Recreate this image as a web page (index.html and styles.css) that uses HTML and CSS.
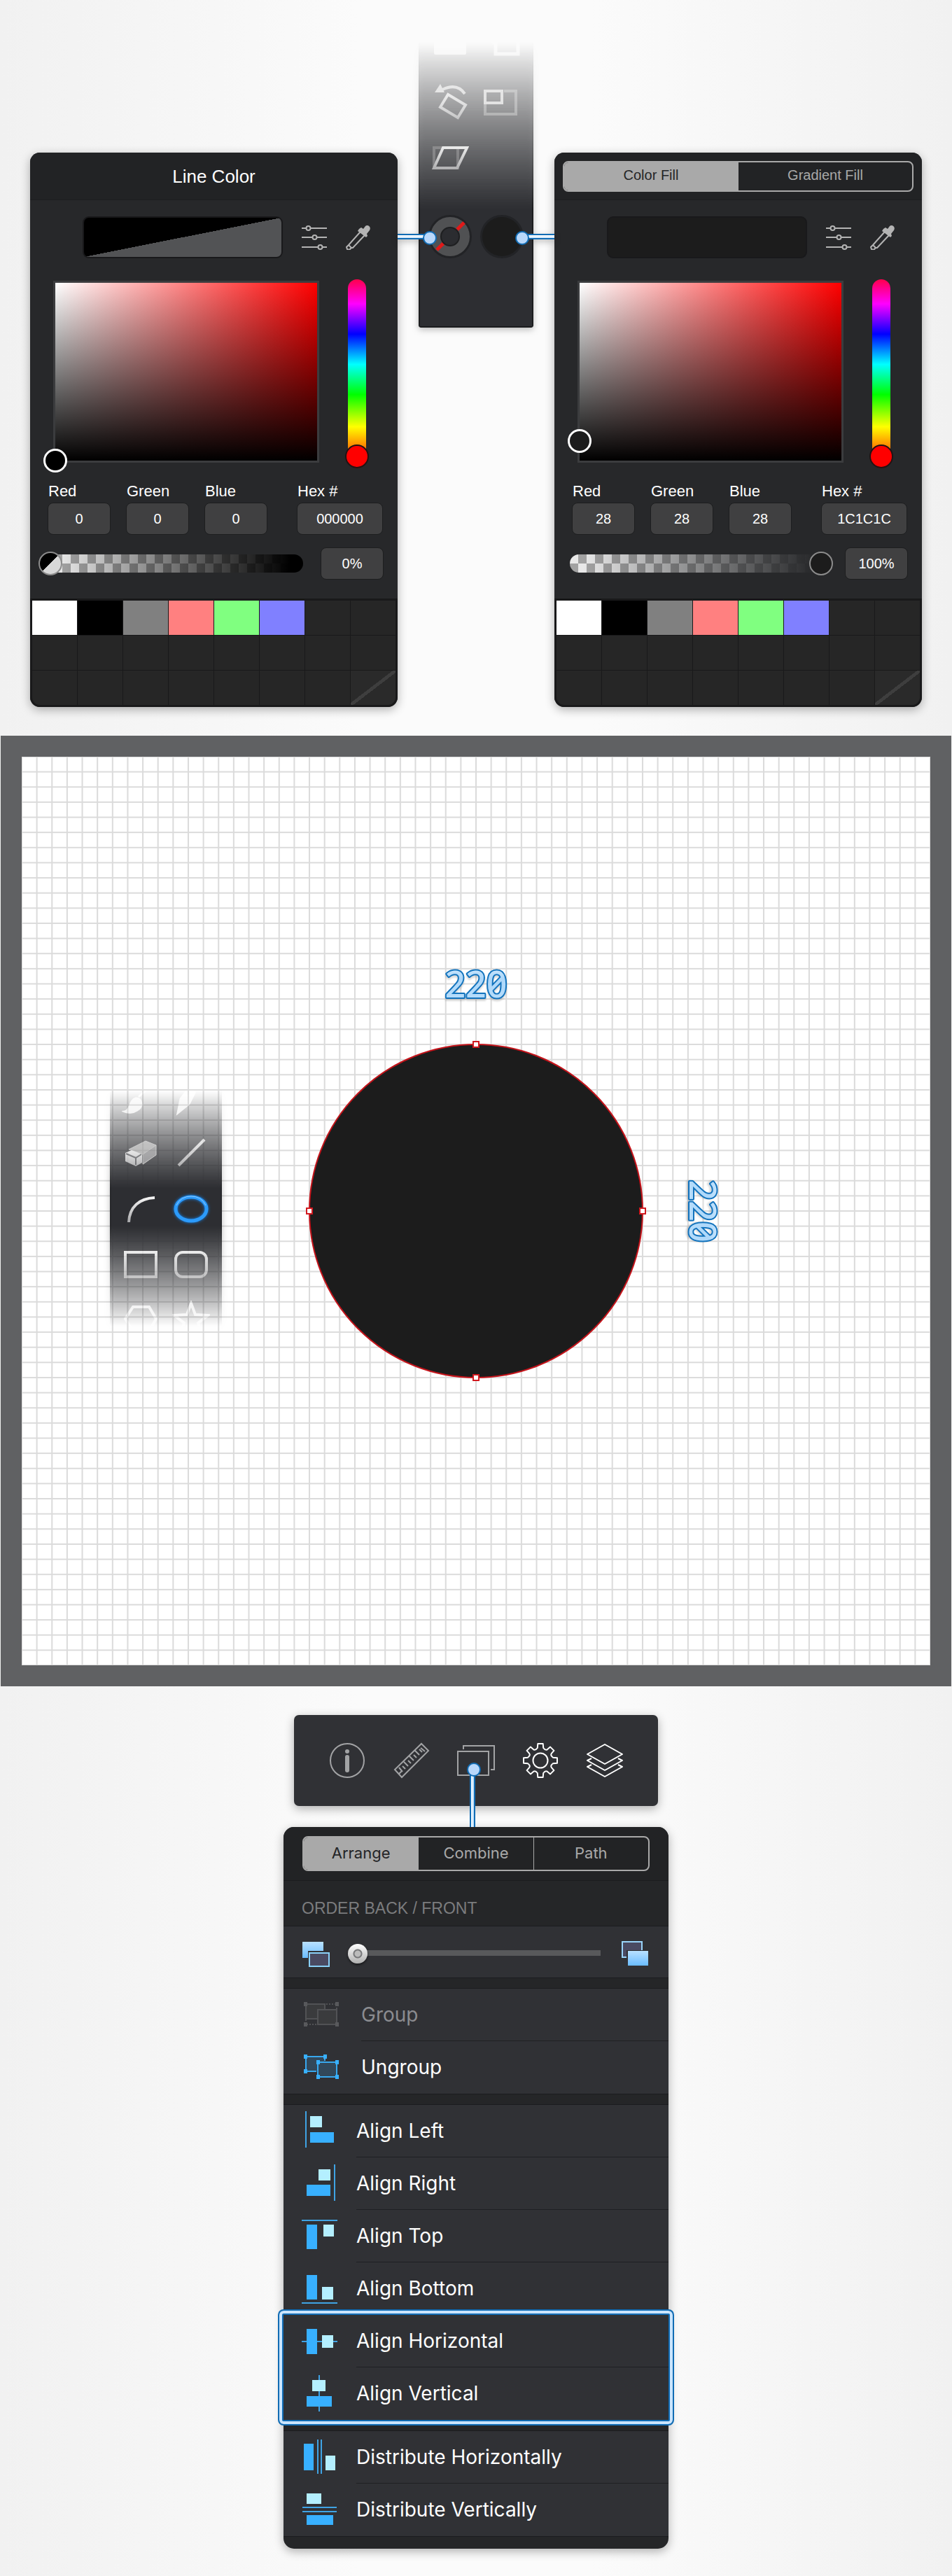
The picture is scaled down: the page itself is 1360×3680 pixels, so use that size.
FILE: index.html
```html
<!DOCTYPE html>
<html lang="en">
<head>
<meta charset="utf-8">
<meta name="viewport" content="width=device-width, initial-scale=1">
<title>Draw a circle and align it</title>
<link rel="stylesheet" href="styles.css">
</head>
<body>
<svg class="defs" aria-hidden="true">
  <defs>
    <linearGradient id="steel" x1="0" y1="0" x2="0" y2="1"><stop offset="0" stop-color="#f4f4f4"/><stop offset="1" stop-color="#a9a9ab"/></linearGradient>
    <linearGradient id="sky" x1="0" y1="0" x2="0" y2="1"><stop offset="0" stop-color="#b9e1ff"/><stop offset="1" stop-color="#6abcff"/></linearGradient>
    <symbol id="sliders" viewBox="0 0 36 36">
      <g fill="none" stroke="#b4b4b4" stroke-width="2"><path d="M0 5h6M13 5h23M0 18h15M22 18h14M0 32h23M30 32h6"/><circle cx="9.500" cy="5" r="3"/><circle cx="18.500" cy="18" r="3"/><circle cx="26.500" cy="32" r="3"/></g>
    </symbol>
    <symbol id="dropper" viewBox="0 0 36 36">
      <path d="M19 6l3-2 3 2 3-4c3-3 9 1 6 6l-4 5 1 3-2 2-12-9z" fill="#b4b4b4"/>
      <path d="M21 10L4 29l-3 3 1 3 3 1 3-3h2L27 15" fill="none" stroke="#b4b4b4" stroke-width="2" stroke-linejoin="round"/><path d="M4 29l4 4" stroke="#b4b4b4" stroke-width="2"/>
    </symbol>
  </defs>
</svg>

<main>
<section class="colors">
  <form class="panel">
    <header class="panel-head"><h2>Line Color</h2></header>
    <div class="preview-row">
      <div class="preview preview-split"></div>
      <button type="button" class="icon-btn" aria-label="Sliders"><svg><use href="#sliders"/></svg></button>
      <button type="button" class="icon-btn" aria-label="Pick color"><svg><use href="#dropper"/></svg></button>
    </div>
    <div class="picker-row">
      <div class="field"><span class="field-thumb thumb-black"></span></div>
      <div class="hue"><input type="range" min="0" max="360" value="0" aria-label="Hue"></div>
    </div>
    <div class="values">
      <label>Red<input type="text" value="0"></label>
      <label>Green<input type="text" value="0"></label>
      <label>Blue<input type="text" value="0"></label>
      <label class="hex">Hex #<input type="text" value="000000"></label>
    </div>
    <div class="alpha-row">
      <div class="alpha alpha-empty"><input type="range" min="0" max="100" value="0" aria-label="Opacity"></div>
      <input class="percent" type="text" value="0%" aria-label="Opacity percent">
    </div>
    <div class="swatches">
      <button type="button" class="white" aria-label="White"></button><button type="button" class="black" aria-label="Black"></button><button type="button" class="gray" aria-label="Gray"></button><button type="button" class="red" aria-label="Red"></button><button type="button" class="green" aria-label="Green"></button><button type="button" class="blue" aria-label="Blue"></button><i></i><i></i>
      <i></i><i></i><i></i><i></i><i></i><i></i><i></i><i></i>
      <i></i><i></i><i></i><i></i><i></i><i></i><i></i><button type="button" class="none" aria-label="No color"></button>
    </div>
  </form>

  <div class="toolbox">
    <div class="strip strip-down">
      <button type="button" aria-label="Blend"><svg width="54" height="54" viewBox="0 0 54 54"><path d="M6 5h42v32H6z" fill="#fff" stroke="#fff" stroke-width="4" stroke-linejoin="round"/><path d="M12 28l7-12 8 12zM32 28l7-12 8 12z" fill="#eee"/></svg></button>
      <button type="button" aria-label="Duplicate"><svg width="54" height="54" viewBox="0 0 54 54"><path d="M8 0l8 24M18 4h32v34H18z" fill="none" stroke="#fff" stroke-width="5"/></svg></button>
      <button type="button" aria-label="Rotate"><svg width="54" height="54" viewBox="0 0 54 54"><path d="M24 17l25 15-11 18-25-15z" fill="none" stroke="url(#steel)" stroke-width="4"/><path d="M16 10q21-10 32 6" fill="none" stroke="#ddd" stroke-width="4"/><path d="M5 14l8-12 6 12z" fill="#ddd"/></svg></button>
      <button type="button" aria-label="Scale"><svg width="54" height="54" viewBox="0 0 54 54"><path d="M30 12h17v33H3V30" fill="none" stroke="#c8c8c8" stroke-opacity=".5" stroke-width="4"/><path d="M3 12h24v17H3z" fill="none" stroke="#ddd" stroke-width="4"/></svg></button>
      <button type="button" aria-label="Shear"><svg width="54" height="54" viewBox="0 0 54 54"><path d="M4 14h34v29H4z" fill="none" stroke="#aaa" stroke-opacity=".4" stroke-width="4"/><path d="M17 14h34L37 43H4z" fill="none" stroke="url(#steel)" stroke-width="4"/></svg></button>
      <span></span>
      <button type="button" class="ink" aria-label="Line color"><svg width="64" height="64" viewBox="0 0 64 64"><circle cx="32" cy="32" r="31" fill="#222326"/><circle cx="32" cy="32" r="20.500" fill="none" stroke="#505153" stroke-width="15"/><path d="M13 51l10-10M42 22l10-10" stroke="#e11919" stroke-width="5"/><circle cx="32" cy="32" r="13" fill="#2b2c30" stroke="#1e1f21" stroke-width="2"/></svg></button>
      <button type="button" class="ink" aria-label="Fill color"><svg width="64" height="64" viewBox="0 0 64 64"><circle cx="32" cy="32" r="31" fill="#222326"/><circle cx="32" cy="32" r="28" fill="#1c1c1c"/></svg></button>
    </div>
    <span class="wire wire-left"></span>
    <span class="wire wire-right"></span>
  </div>

  <form class="panel">
    <header class="panel-head head-tabs">
      <div class="tabs tabs-small"><button type="button" class="on">Color Fill</button><button type="button">Gradient Fill</button></div>
    </header>
    <div class="preview-row">
      <div class="preview"></div>
      <button type="button" class="icon-btn" aria-label="Sliders"><svg><use href="#sliders"/></svg></button>
      <button type="button" class="icon-btn" aria-label="Pick color"><svg><use href="#dropper"/></svg></button>
    </div>
    <div class="picker-row">
      <div class="field"><span class="field-thumb thumb-ink"></span></div>
      <div class="hue"><input type="range" min="0" max="360" value="0" aria-label="Hue"></div>
    </div>
    <div class="values">
      <label>Red<input type="text" value="28"></label>
      <label>Green<input type="text" value="28"></label>
      <label>Blue<input type="text" value="28"></label>
      <label class="hex">Hex #<input type="text" value="1C1C1C"></label>
    </div>
    <div class="alpha-row">
      <div class="alpha alpha-full"><input type="range" min="0" max="100" value="100" aria-label="Opacity"></div>
      <input class="percent" type="text" value="100%" aria-label="Opacity percent">
    </div>
    <div class="swatches">
      <button type="button" class="white" aria-label="White"></button><button type="button" class="black" aria-label="Black"></button><button type="button" class="gray" aria-label="Gray"></button><button type="button" class="red" aria-label="Red"></button><button type="button" class="green" aria-label="Green"></button><button type="button" class="blue" aria-label="Blue"></button><i></i><i></i>
      <i></i><i></i><i></i><i></i><i></i><i></i><i></i><i></i>
      <i></i><i></i><i></i><i></i><i></i><i></i><i></i><button type="button" class="none" aria-label="No color"></button>
    </div>
  </form>
</section>

<section class="canvas">
  <svg class="art" viewBox="0 0 1298 1298">
    <defs>
      <pattern id="grid" width="21.6333" height="21.6333" patternUnits="userSpaceOnUse"><path d="M0 0H21.6333M0 0V21.6333M0 21.6333H21.6333M21.6333 0V21.6333" stroke="#000" stroke-opacity=".14" stroke-width="2" fill="none"/></pattern>
      <linearGradient id="ice" x1="0" y1="0" x2="0" y2="1"><stop offset="0" stop-color="#e6f4ff"/><stop offset=".4" stop-color="#aed8fa"/><stop offset="1" stop-color="#b8defb"/></linearGradient>
    </defs>
    <rect width="1298" height="1298" fill="#fff"/>
    <rect width="1298" height="1298" fill="url(#grid)"/>
    <circle cx="649" cy="649" r="238" fill="#1c1c1c" stroke="#c4141b" stroke-width="2"/>
    <g fill="#fff" stroke="#d11a20" stroke-width="2"><path d="M645 407h8v8h-8zM645 883h8v8h-8zM407 645h8v8h-8zM883 645h8v8h-8z"/></g>
    <text class="dim" x="649" y="344" text-anchor="middle">220</text>
    <text class="dim" transform="translate(954 649) rotate(90)" text-anchor="middle">220</text>
  </svg>
  <div class="toolbox shape-tools">
    <div class="strip strip-both">
      <button type="button" aria-label="Brush"><svg width="54" height="54" viewBox="0 0 54 54"><path d="M4 46c9-1 6-16 16-19 9-1 11 12 2 17-6 4-14 4-18 2zM24 25L42 8" fill="#fff" stroke="#fff" stroke-width="3"/></svg></button>
      <button type="button" aria-label="Pen"><svg width="54" height="54" viewBox="0 0 54 54"><path d="M8 48l4-20L24 12l8 7-8 16zM30 12L42 2" fill="#fff" stroke="#fff" stroke-width="3"/></svg></button>
      <button type="button" aria-label="Eraser"><svg width="54" height="54" viewBox="0 0 54 54"><path d="M10 21L34 9l15 6-19 13z" fill="#aaa"/><path d="M30 28l19-13v14L30 43z" fill="#8d8d8f"/><path d="M10 21L34 9l15 6v14L30 42V28zM30 28l19-13" fill="none" stroke="#c2c2c2" stroke-width="1"/><path d="M5 26l9-4 15 6v12l-9 5-15-7z" fill="url(#steel)"/><path d="M6 27l14 6 8-5M20 33v10" fill="none" stroke="#55565a" stroke-width="2"/></svg></button>
      <button type="button" aria-label="Line"><svg width="54" height="54" viewBox="0 0 54 54"><path d="M9 44L46 7" stroke="url(#steel)" stroke-width="4"/></svg></button>
      <button type="button" aria-label="Arc"><svg width="54" height="54" viewBox="0 0 54 54"><path d="M10 46C11 24 25 12 47 11" fill="none" stroke="url(#steel)" stroke-width="4"/></svg></button>
      <button type="button" aria-label="Ellipse" class="active"><svg width="54" height="54" viewBox="0 0 54 54"><ellipse cx="27" cy="27" rx="22" ry="17" fill="none" stroke="#2c9bfb" stroke-width="5"/><path d="M6 22Q12 9 27 9t21 13" fill="none" stroke="#8dc9ff" stroke-width="1"/></svg></button>
      <button type="button" aria-label="Rectangle"><svg width="54" height="54" viewBox="0 0 54 54"><path d="M5 10h44v35H5z" fill="none" stroke="url(#steel)" stroke-width="4"/></svg></button>
      <button type="button" aria-label="Rounded rectangle"><svg width="54" height="54" viewBox="0 0 54 54"><rect x="5" y="10" width="44" height="35" rx="10" fill="none" stroke="url(#steel)" stroke-width="4"/></svg></button>
      <button type="button" aria-label="Polygon"><svg width="54" height="54" viewBox="0 0 54 54"><path d="M16 9h23l10 17-10 18H16L5 26z" fill="none" stroke="#fff" stroke-width="4"/></svg></button>
      <button type="button" aria-label="Star"><svg width="54" height="54" viewBox="0 0 54 54"><path d="M27 4l6 16 18 1-14 11 5 17-15-10-15 10 5-17L3 21l18-1z" fill="none" stroke="#fff" stroke-width="4"/></svg></button>
    </div>
  </div>
</section>

<section class="arrange">
  <nav class="toolbar">
    <button type="button" aria-label="Info"><svg width="54" height="54" viewBox="0 0 54 54"><circle cx="27" cy="27" r="24" fill="none" stroke="#a2a3a5" stroke-width="2"/><circle cx="27" cy="14" r="3" fill="#a2a3a5"/><path d="M27 22v19" stroke="#a2a3a5" stroke-width="6" stroke-linecap="round"/></svg></button>
    <button type="button" aria-label="Measure"><svg width="54" height="54" viewBox="0 0 54 54"><path d="M41 3l10 10-38 38L3 40zM9 46l4-4M14 43l-5-6M18 39l-4-4M22 35l-6-6M26 31l-4-4M30 27l-6-6M34 23l-4-4M38 19l-6-6M42 15l-4-4M46 14l-6-5" fill="none" stroke="#a2a3a5" stroke-width="2"/></svg></button>
    <button type="button" aria-label="Arrange"><svg width="54" height="54" viewBox="0 0 54 54"><path d="M1 14h44v34H1zM9 11V6h44v34h-5" fill="none" stroke="#a2a3a5" stroke-width="2"/></svg></button>
    <button type="button" aria-label="Settings"><svg width="54" height="54" viewBox="-27 -27 54 54"><g fill="none" stroke="#fff" stroke-width="2" stroke-linejoin="round"><circle r="10.500"/><path d="M-4.200-18L-3.700-24H3.700L4.200-18Q7-14 9.800-15.700L14.100-19.400 19.400-14.100 15.700-9.800Q14-7 18-4.200L24-3.700V3.700L18 4.200Q14 7 15.700 9.800L19.400 14.100 14.100 19.400 9.800 15.700Q7 14 4.200 18L3.700 24H-3.700L-4.200 18Q-7 14-9.800 15.700L-14.100 19.400-19.400 14.100-15.700 9.800Q-14 7-18 4.200L-24 3.700V-3.700L-18-4.200Q-14-7-15.700-9.800L-19.400-14.100-14.100-19.400-9.800-15.700Q-7-14-4.200-18z"/></g></svg></button>
    <button type="button" aria-label="Layers"><svg width="54" height="54" viewBox="0 0 54 54"><path d="M27 4l25 14-25 14L2 18zM8 24l-6 3 25 14 25-14-6-3M8 33l-6 3 25 14 25-14-6-3" fill="none" stroke="#fff" stroke-width="2" stroke-linejoin="round"/></svg></button>
    <span class="wire wire-down"></span>
  </nav>

  <div class="menu">
    <header class="menu-head"><div class="tabs"><button type="button" class="on">Arrange</button><button type="button">Combine</button><button type="button">Path</button></div></header>
    <h3>ORDER BACK / FRONT</h3>
    <div class="group order">
      <svg width="40" height="38" viewBox="0 0 40 38"><path d="M0 2h30v13H8v10H0z" fill="url(#sky)"/><path d="M10 18h28v19H10z" fill="#4a4a62" stroke="#8ad0f8" stroke-width="2"/></svg>
      <input type="range" min="0" max="100" value="0" aria-label="Order back / front">
      <svg width="40" height="38" viewBox="0 0 40 38"><path d="M2 2h28v22H2z" fill="#4a4a62" stroke="#9ad4fa" stroke-width="2"/><path d="M8 14h32v23H8z" fill="#303135"/><path d="M10 15h29v21H10z" fill="url(#sky)"/></svg>
    </div>
    <div class="group wide">
      <button type="button" disabled><svg width="60" height="60" viewBox="0 0 60 60"><g fill="#3a3b3d" stroke="#515255" stroke-width="2"><path d="M9 14h27v21H9z"/><path d="M26 22h27v21H26z"/><path d="M38 14h15v8M9 36v7h16" stroke-dasharray="2 2" fill="none"/></g><path d="M6 11h5v6H6zM51 11h5v6h-5zM6 40h5v6H6zM51 40h5v6h-5z" fill="#58595c"/></svg><span>Group</span></button>
      <button type="button"><svg width="60" height="60" viewBox="0 0 60 60"><g fill="#32485a" stroke="#38a8ee" stroke-width="2"><path d="M36 20v-6H9v21h15"/><path d="M26 22h27v21H26z"/></g><path d="M6 11h5v6H6zM34 11h5v6h-5zM6 32h5v6H6zM24 19h5v6h-5zM51 19h5v6h-5zM24 40h5v6h-5zM51 40h5v6h-5z" fill="#38b0ff"/></svg><span>Ungroup</span></button>
    </div>
    <div class="group">
      <button type="button"><svg width="60" height="60" viewBox="0 0 60 60"><path d="M9 1v52" class="guide"/><path d="M15 8h17v16H15z" class="pale"/><path d="M15 31h34v15H15z" class="bar"/></svg><span>Align Left</span></button>
      <button type="button"><svg width="60" height="60" viewBox="0 0 60 60"><path d="M50 2v52" class="guide"/><path d="M27 9h17v16H27z" class="pale"/><path d="M10 31h34v16H10z" class="bar"/></svg><span>Align Right</span></button>
      <button type="button"><svg width="60" height="60" viewBox="0 0 60 60"><path d="M3 7h51" class="guide"/><path d="M34 13h15v17H34z" class="pale"/><path d="M10 13h15v35H10z" class="bar"/></svg><span>Align Top</span></button>
      <button type="button"><svg width="60" height="60" viewBox="0 0 60 60"><path d="M3 50h51" class="guide"/><path d="M32 27h16v18H32z" class="pale"/><path d="M10 10h15v35H10z" class="bar"/></svg><span>Align Bottom</span></button>
      <div class="spotlight">
        <button type="button"><svg width="60" height="60" viewBox="0 0 60 60"><path d="M3 30h51" class="guide"/><path d="M32 21h16v18H32z" class="pale"/><path d="M10 12h15v36H10z" class="bar"/></svg><span>Align Horizontal</span></button>
        <button type="button"><svg width="60" height="60" viewBox="0 0 60 60"><path d="M28 3v52" class="guide"/><path d="M18 10h19v16H18z" class="pale"/><path d="M10 33h36v15H10z" class="bar"/></svg><span>Align Vertical</span></button>
      </div>
    </div>
    <div class="group">
      <button type="button"><svg width="60" height="60" viewBox="0 0 60 60"><path d="M26 4v49M31 4v49" class="guide"/><path d="M37 27h14v21H37z" class="pale"/><path d="M6 10h14v38H6z" class="bar"/></svg><span>Distribute Horizontally</span></button>
      <button type="button"><svg width="60" height="60" viewBox="0 0 60 60"><path d="M4 26h49M4 32h49" class="guide"/><path d="M10 6h21v15H10z" class="pale"/><path d="M10 37h38v14H10z" class="bar"/></svg><span>Distribute Vertically</span></button>
    </div>
  </div>
</section>
</main>
</body>
</html>
```

FILE: styles.css
```css
* { box-sizing: border-box; }

body {
  margin: 0;
  background: linear-gradient(90deg, #f1f1f1, #fbfbfb 38%, #fbfbfb 62%, #f1f1f1);
  font-family: "Liberation Sans", Arial, sans-serif;
  color: #fff;
}

button, input { margin: 0; font: inherit; color: inherit; }
button { border: 0; padding: 0; background: none; }
.defs { position: absolute; width: 0; height: 0; }

/* ---- colour panels ---- */
.colors {
  display: grid;
  grid-template-columns: minmax(0, 525px) 164px minmax(0, 525px);
  gap: 30px;
  justify-content: center;
  align-items: start;
  padding: 26px 0 41px;
}

.panel {
  margin-top: 192px;
  border-radius: 14px;
  background: #27282a;
  box-shadow: 0 4px 14px rgba(0, 0, 0, .3);
  overflow: hidden;
}

.panel-head {
  display: flex;
  align-items: center;
  justify-content: center;
  height: 68px;
  padding: 0 12px;
  background: #222325;
  border-bottom: 1px solid #1d1e20;
}
.panel-head h2 { margin: 0; font-size: 26px; font-weight: 400; line-height: 32px; }

.tabs {
  display: flex;
  flex: 1;
  height: 50px;
  border: 2px solid #a9a9a9;
  border-radius: 8px;
  overflow: hidden;
  font-family: Inter, sans-serif;
  font-size: 22px;
  color: #a9a9a9;
}
.tabs button { flex: 1; padding-bottom: 2px; }
.tabs button + button { border-left: 1px solid #a9a9a9; }
.tabs .on { background: #a9a9a9; color: #242527; }
.tabs-small { height: 44px; font-family: "Liberation Sans", Arial, sans-serif; font-size: 20px; }

.preview-row { display: flex; align-items: center; padding: 23px 38px 0 75px; gap: 27px; }
.preview {
  flex: 1;
  height: 60px;
  border: 2px solid #19191b;
  border-radius: 9px;
  background: #1c1c1c;
}
.preview-split { background: linear-gradient(to bottom right, #000 50%, #525355 50%); }
.icon-btn, .icon-btn svg { display: block; width: 36px; height: 36px; }

.picker-row { display: flex; align-items: flex-end; gap: 38px; padding: 30px 41px 0 33px; }
.field {
  position: relative;
  flex: 1;
  height: 260px;
  margin-bottom: 8px;
  border: 3px solid #3b3c3e;
  background: linear-gradient(to top, #000, transparent), linear-gradient(to right, #fff, #f00);
}
.field-thumb {
  position: absolute;
  width: 34px;
  height: 34px;
  border: 3px solid #fff;
  border-radius: 50%;
  transform: translate(-50%, 50%);
  left: 0;
}
.thumb-black { bottom: 0; background: #000; }
.thumb-ink { bottom: 11%; background: #1c1c1c; }

.hue {
  display: flex;
  justify-content: center;
  width: 26px;
  height: 270px;
  margin: 0 4px 0 3px;
  border-radius: 13px;
  background: linear-gradient(#ff004c, #f0f 13%, #00f 29%, #0ff 45%, #0f0 61%, #ff0 78%, #f00);
}
.hue input {
  appearance: none;
  flex: none;
  width: 34px;
  height: 270px;
  writing-mode: vertical-lr;
  direction: rtl;
  background: none;
}
.hue input::-webkit-slider-thumb {
  appearance: none;
  width: 34px;
  height: 34px;
  border: 2px solid #221313;
  border-radius: 50%;
  background: #f00;
}

.values { display: grid; grid-template-columns: repeat(3, 90px) 123px; gap: 22px; padding: 21px 20px 0 25px; }
.values label { display: grid; gap: 4px; font-size: 22px; line-height: 24px; text-indent: 1px; }
.values .hex { margin-left: 20px; width: 123px; }
.values input, .percent {
  width: 100%;
  height: 46px;
  padding: 0;
  border: 1px solid #1d1e1f;
  border-radius: 8px;
  background: #404041;
  font-size: 20px;
  text-align: center;
}

.alpha-row { display: flex; align-items: center; justify-content: space-between; padding: 18px 20px 27px 22px; }
.alpha { width: 368px; height: 26px; display: flex; align-items: center; border-radius: 13px; }
.alpha-empty { background: linear-gradient(90deg, transparent 5%, #000 95%), repeating-conic-gradient(#a2a2a2 0 25%, #e8e8e8 0 50%) 0 0 / 24px 26px; }
.alpha-full { background: linear-gradient(90deg, transparent 5%, #27282a 95%), repeating-conic-gradient(#a2a2a2 0 25%, #e8e8e8 0 50%) 0 0 / 24px 26px; }
.alpha input { appearance: none; flex: 1; height: 36px; margin: 0 -8px 0 -10px; background: none; }
.alpha input::-webkit-slider-thumb {
  appearance: none;
  width: 34px;
  height: 34px;
  border: 2px solid #8c8c8c;
  border-radius: 50%;
  background: #1c1c1c;
}
.alpha-empty input::-webkit-slider-thumb { background: linear-gradient(135deg, #000 50%, #d8d8d8 50%); }
.percent { width: 90px; }

.swatches {
  display: grid;
  grid-template-columns: repeat(8, 1fr);
  grid-auto-rows: 49px;
  gap: 1px;
  padding: 3px;
  background: #19191a;
}
.swatches i { background: #262626; }
.swatches i:nth-child(17) { border-bottom-left-radius: 11px; }
.white { background: #fff; }
.black { background: #000; }
.gray { background: #808080; }
.red { background: #ff8080; }
.green { background: #80ff80; }
.blue { background: #8080ff; }
.none {
  border-bottom-right-radius: 11px;
  background: linear-gradient(to bottom right, #2a2a2a 47%, #3e3e3e 47%, #3e3e3e 53%, #2a2a2a 53%);
}

/* ---- fading tool strips ---- */
.toolbox { position: relative; filter: drop-shadow(0 3px 5px rgba(0, 0, 0, .25)); }
.strip {
  display: grid;
  grid-template-columns: 1fr 1fr;
  grid-auto-rows: 79px;
  padding: 0 6px;
  border: solid #1b1c1e;
  border-width: 0 2px;
  background: #2d2e32;
}
.strip button { display: grid; place-items: center; }
.strip-down {
  padding-bottom: 77px;
  border-bottom-width: 2px;
  border-radius: 0 0 3px 3px;
  grid-template-rows: repeat(3, 79px) 126px;
  mask-image: linear-gradient(transparent 34px, #000 272px);
}
.strip-down .ink { padding-top: 24px; }
.strip-both { border-color: #28292c; mask-image: linear-gradient(transparent 28px, #000 168px, #000 223px, transparent 366px); }
.active svg { filter: drop-shadow(0 0 2px #1480e8); }

/* ---- blue callout wires ---- */
.wire {
  position: absolute;
  border: solid #116cb4;
  background: linear-gradient(#fff, #cfe6fb);
}
.wire::after {
  content: "";
  position: absolute;
  width: 16px;
  height: 16px;
  border: 2px solid #116cb4;
  border-radius: 50%;
  background: #b9d8fb;
}
.wire-left, .wire-right { top: 308px; width: 48px; height: 8px; border-width: 2px 0; }
.wire-left { left: -30px; }
.wire-left::after { right: -8px; top: -6px; }
.wire-right { right: -30px; }
.wire-right::after { left: -8px; top: -6px; }
.wire-down {
  left: calc(50% - 9px);
  top: 76px;
  width: 8px;
  height: 84px;
  border-width: 0 2px;
  background: linear-gradient(90deg, #fff, #b5dcfc);
}
.wire-down::after { left: -6px; top: -8px; }

/* ---- drawing canvas ---- */
.canvas { position: relative; margin: 0 1px; border: 30px solid #606163; }
.art { display: block; width: 100%; height: auto; }
.dim {
  font-family: "Noto Sans", sans-serif;
  font-size: 52px;
  font-weight: 500;
  font-feature-settings: "zero";
  fill: url(#ice);
  stroke: #1273bd;
  stroke-width: 4px;
  stroke-linejoin: round;
  paint-order: stroke;
  filter: drop-shadow(0 3px 1px rgba(0, 0, 0, .15));
}
.shape-tools { position: absolute; left: 10%; top: 35%; width: 160px; margin-left: -4px; margin-top: -6px; }

/* ---- arrange menu ---- */
.arrange { display: flex; flex-direction: column; align-items: center; gap: 30px; padding: 41px 20px 38px; }
.toolbar {
  position: relative;
  z-index: 1;
  display: flex;
  align-items: center;
  justify-content: center;
  gap: 38px;
  width: 100%;
  max-width: 520px;
  height: 130px;
  border-radius: 7px;
  background: #303135;
  box-shadow: 0 4px 14px rgba(0, 0, 0, .3);
}
.toolbar button { display: grid; }

.menu {
  width: 100%;
  max-width: 550px;
  padding-bottom: 17px;
  border-radius: 15px;
  background: #252628;
  box-shadow: 0 4px 14px rgba(0, 0, 0, .3);
}
.menu-head {
  display: flex;
  align-items: center;
  height: 77px;
  padding: 0 27px;
  border-bottom: 1px solid #1c1d1f;
  border-radius: 15px 15px 0 0;
  background: #222325;
}
.menu h3 {
  margin: 0;
  padding: 24px 26px 10px;
  font-size: 23px;
  font-weight: 400;
  line-height: 30px;
  color: #7b7c7e;
}
.group { border: solid #1b1c1f; border-width: 1px 0; background: #303135; }
.group + .group { margin-top: 14px; }
.group button {
  display: flex;
  align-items: center;
  gap: 21px;
  width: 100%;
  height: 75px;
  padding-left: 23px;
  font-family: Inter, sans-serif;
  font-size: 28px;
  text-align: left;
}
.group button span {
  flex: 1;
  height: 75px;
  line-height: 74px;
  border-bottom: 1px solid #1f2023;
}
.group > button:last-child span, .spotlight button:last-child span { border-bottom: 0; }
.wide button { gap: 28px; }
.group button:disabled { color: #8b8c90; }
.guide { stroke: #3fa3e4; stroke-width: 2; }
.bar { fill: #38b0ff; }
.pale { fill: #b4efff; }

.order { display: flex; align-items: center; gap: 25px; height: 75px; padding: 4px 28px 0 27px; }
.order input { appearance: none; flex: 1; height: 28px; margin-right: 4px; background: linear-gradient(#58595b, #58595b) 10px 9px / 100% 8px no-repeat; border-radius: 4px; }
.order input::-webkit-slider-thumb {
  appearance: none;
  width: 28px;
  height: 28px;
  border-radius: 50%;
  background: radial-gradient(circle, #bbb 4px, #77787a 5px, #77787a 6px, transparent 7px), linear-gradient(#fff, #b0b0b0);
  box-shadow: 0 2px 3px #17181a;
}

.spotlight { position: relative; }
.spotlight::after {
  content: "";
  position: absolute;
  inset: -8px;
  border: 2px solid #116cb4;
  border-radius: 8px;
  box-shadow: inset 0 0 0 4px #cbe5fd, inset 0 0 0 6px #116cb4;
  pointer-events: none;
}
```
